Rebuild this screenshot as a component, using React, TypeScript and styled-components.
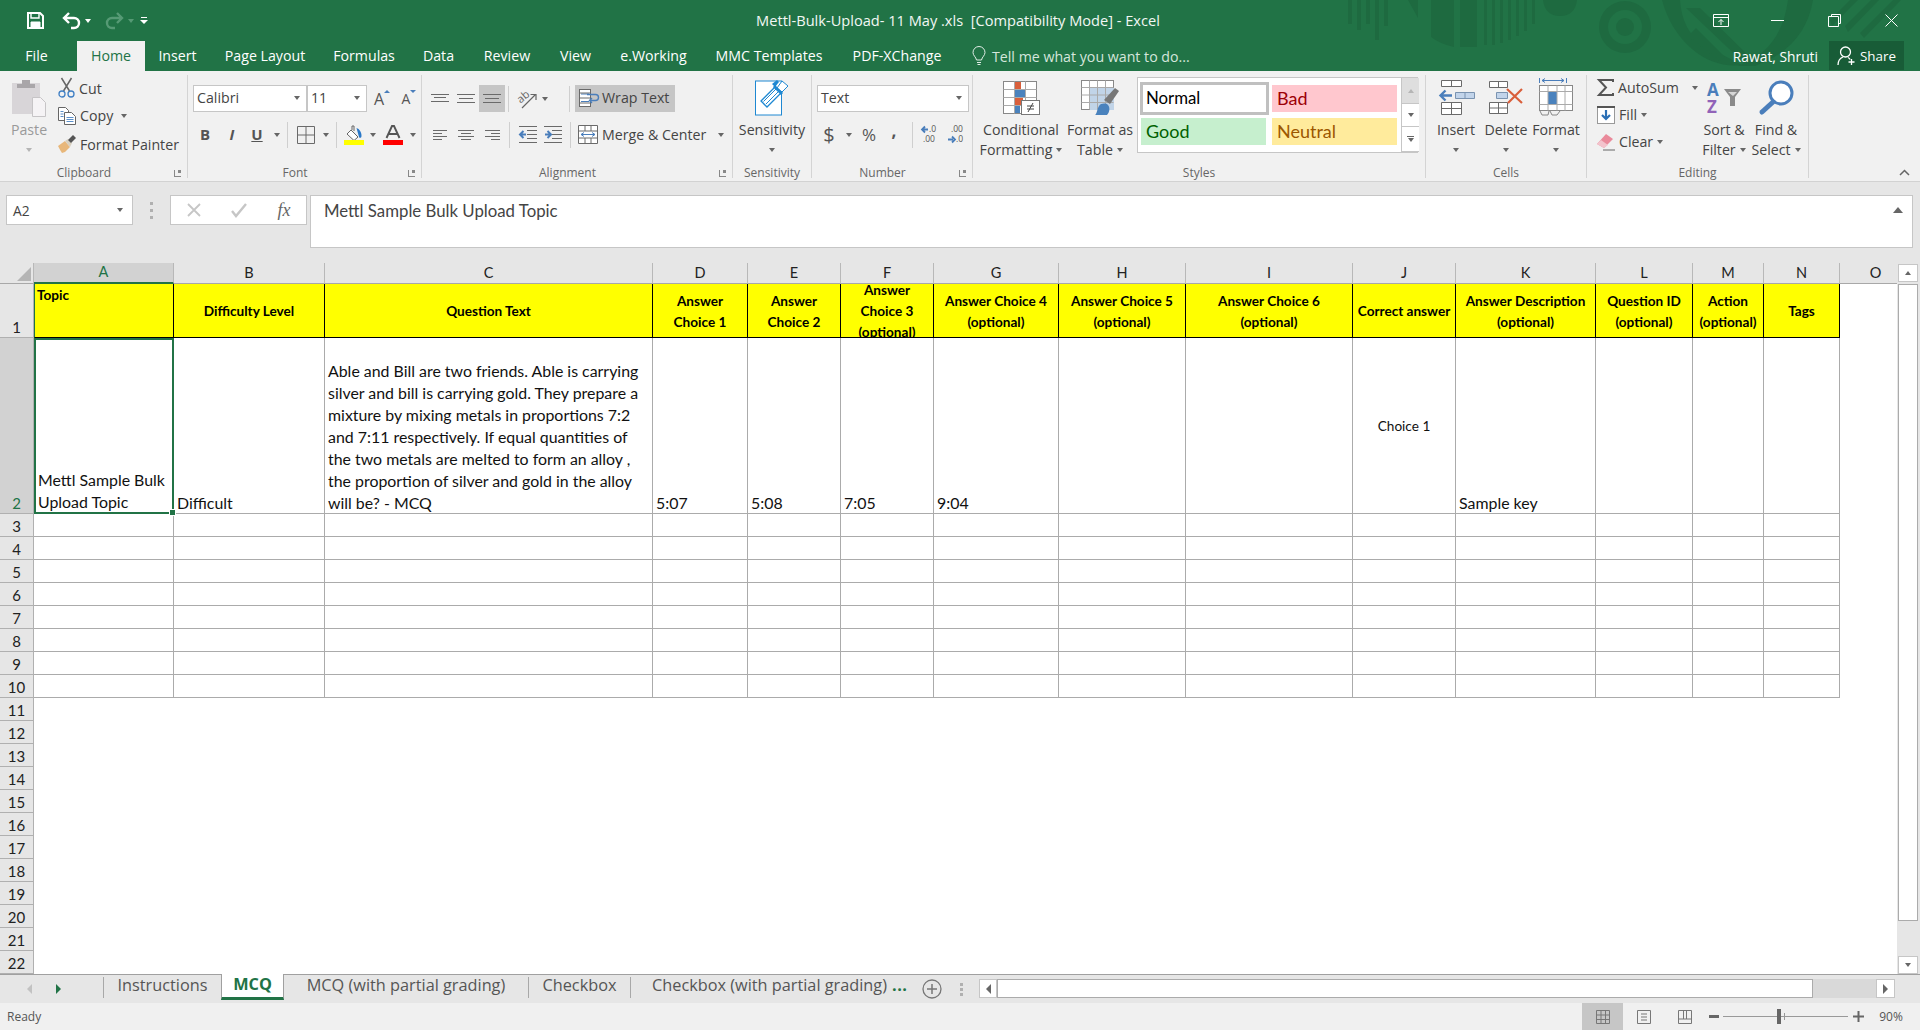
import * as React from 'react';
import styled, { createGlobalStyle } from 'styled-components';

const UI = '"Open Sans", "Noto Sans", sans-serif';
const SHEET = 'Lato, "Noto Sans", sans-serif';
const GREEN = '#217346';

const GlobalStyle = createGlobalStyle`
  html, body { margin: 0; padding: 0; background: #fff; }
  body { font-family: ${UI}; }
  svg { display: block; flex: none; overflow: visible; }
`;

const Page = styled.div`
  width: 1920px;
  height: 1030px;
  display: flex;
  flex-direction: column;
  overflow: hidden;
`;

/* title bar */
const TitleBar = styled.header`
  position: relative;
  height: 71px;
  flex: none;
  background: ${GREEN};
  color: #fff;
  overflow: hidden;
`;

const Pattern = styled.svg`
  position: absolute;
  top: 0;
  left: 1300px;
`;

const TopRow = styled.div`
  position: relative;
  height: 41px;
  display: flex;
  align-items: center;
`;

const Qat = styled.div`
  width: 756px;
  flex: none;
  padding-left: 27px;
  box-sizing: border-box;
  display: flex;
  align-items: center;
`;

const Title = styled.div`
  width: 404px;
  flex: none;
  padding-bottom: 1px;
  font-size: 14.6px;
  white-space: pre;
  text-align: center;
  color: #f2f7f4;
`;

const WinControls = styled.div`
  margin-left: auto;
  display: flex;
  align-items: center;
`;

const WinSlot = styled.div`
  width: 57px;
  display: flex;
  justify-content: center;
`;

const TabRow = styled.nav`
  position: relative;
  height: 30px;
  display: flex;
`;

const RibbonTab = styled.div<{ $w: number; $active?: boolean; $mr?: number }>`
  width: ${p => p.$w}px;
  flex: none;
  margin-right: ${p => p.$mr ?? 0}px;
  padding-bottom: 1px;
  box-sizing: border-box;
  display: flex;
  align-items: center;
  justify-content: center;
  font-size: 14.2px;
  white-space: nowrap;
  background: ${p => (p.$active ? '#f1f1f1' : 'transparent')};
  color: ${p => (p.$active ? GREEN : '#fff')};
`;

const TellMe = styled.div`
  display: flex;
  align-items: center;
  gap: 6px;
  margin-left: 15px;
  font-size: 14.2px;
  color: #d5e6dc;
`;

const UserName = styled.div`
  margin-left: auto;
  display: flex;
  align-items: center;
  font-size: 13.8px;
  margin-right: 11px;
`;

const ShareButton = styled.div`
  width: 75px;
  height: 29px;
  margin-right: 16px;
  background: #185c37;
  display: flex;
  align-items: center;
  justify-content: center;
  gap: 4px;
  font-size: 13.4px;
`;

/* ribbon */
const Ribbon = styled.section`
  height: 111px;
  flex: none;
  box-sizing: border-box;
  padding-top: 4px;
  background: #f1f1f1;
  border-bottom: 1px solid #d2d2d2;
  display: flex;
  color: #444;
  font-size: 14.2px;
`;

const Group = styled.div<{ $w: number }>`
  width: ${p => p.$w}px;
  height: 103px;
  flex: none;
  box-sizing: border-box;
  border-right: 1px solid #d4d4d4;
  display: flex;
  flex-direction: column;
`;

const GroupBody = styled.div<{ $pl?: number }>`
  height: 89px;
  flex: none;
  box-sizing: border-box;
  padding-left: ${p => p.$pl ?? 0}px;
  display: flex;
`;

const StackBody = styled(GroupBody)`
  flex-direction: column;
  padding-top: 10px;
  gap: 9px;
`;

const GroupLabel = styled.div<{ $launcher?: boolean }>`
  height: 14px;
  flex: none;
  margin-top: 2px;
  box-sizing: border-box;
  padding-right: ${p => (p.$launcher ? 19 : 0)}px;
  display: grid;
  grid-template-columns: 1fr auto 1fr;
  align-items: center;
  font-size: 12px;
  color: #666;
  line-height: 14px;
`;

const Launcher = styled.span`
  grid-column: 3;
  justify-self: end;
  margin-right: -13px;
  width: 7px;
  height: 7px;
  box-sizing: border-box;
  border-left: 1px solid #888;
  border-bottom: 1px solid #888;
  position: relative;
  &::after {
    content: '';
    position: absolute;
    right: 0;
    top: 0;
    width: 3px;
    height: 3px;
    background: #888;
  }
`;

const Caret = styled.span<{ $c?: string }>`
  display: block;
  width: 0;
  height: 0;
  flex: none;
  border-left: 3.5px solid transparent;
  border-right: 3.5px solid transparent;
  border-top: 4px solid ${p => p.$c ?? '#666'};
`;

const SpacedCaret = styled(Caret)`
  margin-left: 4px;
`;

const GrowMark = styled.span`
  width: 0;
  height: 0;
  flex: none;
  transform: translateY(-7px);
  border-left: 3px solid transparent;
  border-right: 3px solid transparent;
  border-bottom: 3px solid ${'#4a7ebb'};
`;

const ShrinkMark = styled.span`
  width: 0;
  height: 0;
  flex: none;
  transform: translateY(-7px);
  border-left: 3px solid transparent;
  border-right: 3px solid transparent;
  border-top: 3px solid ${'#4a7ebb'};
`;

const ToolRow = styled.div`
  height: 27px;
  display: flex;
  align-items: center;
`;

const Slot = styled.div<{ $w: number; $on?: boolean }>`
  width: ${p => p.$w}px;
  height: 27px;
  flex: none;
  display: flex;
  align-items: center;
  justify-content: center;
  background: ${p => (p.$on ? '#c6c6c6' : 'transparent')};
`;

const Sep = styled.span<{ $ml?: number }>`
  width: 1px;
  height: 26px;
  flex: none;
  margin-left: ${p => p.$ml ?? 0}px;
  background: #cfcfcf;
`;

const Combo = styled.div<{ $w: number }>`
  width: ${p => p.$w}px;
  height: 27px;
  flex: none;
  box-sizing: border-box;
  background: #fff;
  border: 1px solid #c6c6c6;
  padding: 0 6px 2px 3px;
  display: flex;
  align-items: center;
  justify-content: space-between;
  color: #444;
  font-size: 14.2px;
`;

const BigButton = styled.div<{ $w: number }>`
  width: ${p => p.$w}px;
  flex: none;
  display: grid;
  grid-template-columns: 100%;
  grid-template-rows: 45px 20px 20px;
  justify-items: center;
  align-items: center;
  white-space: nowrap;
  line-height: 20px;
`;

const BigLine = styled.span<{ $muted?: boolean }>`
  display: flex;
  align-items: center;
  gap: 4px;
  color: ${p => (p.$muted ? '#9a9a9a' : '#444')};
`;

const SmallColumn = styled.div<{ $w: number; $pl?: number; $mt?: number }>`
  width: ${p => p.$w}px;
  flex: none;
  box-sizing: border-box;
  margin-top: ${p => p.$mt ?? 0}px;
  padding-left: ${p => p.$pl ?? 0}px;
  display: flex;
  flex-direction: column;
`;

const SmallButton = styled.div<{ $h?: number }>`
  height: ${p => p.$h ?? 28}px;
  display: flex;
  align-items: center;
  gap: 4px;
  white-space: nowrap;
`;

const AutoSumText = styled.span`
  width: 70px;
`;

const WrapButton = styled.div`
  width: 100px;
  height: 27px;
  flex: none;
  margin-left: 5px;
  padding: 0 0 2px 4px;
  box-sizing: border-box;
  background: #c6c6c6;
  display: flex;
  align-items: center;
  gap: 3px;
`;

const MergeButton = styled.div`
  width: 153px;
  height: 27px;
  flex: none;
  padding-left: 7px;
  box-sizing: border-box;
  display: flex;
  align-items: center;
  gap: 4px;
  white-space: nowrap;
  ${Caret} { margin-left: auto; }
`;

const FontGlyph = styled.span<{ $weight?: number; $italic?: boolean; $under?: boolean; $size?: number; $lift?: number }>`
  font-size: ${p => p.$size ?? 15}px;
  font-weight: ${p => p.$weight ?? 400};
  font-style: ${p => (p.$italic ? 'italic' : 'normal')};
  text-decoration: ${p => (p.$under ? 'underline' : 'none')};
  margin-bottom: ${p => p.$lift ?? 0}px;
  color: #555;
  line-height: 1;
`;

const Gallery = styled.div`
  width: 281px;
  height: 76px;
  flex: none;
  margin: 2px 0 0 -2px;
  box-sizing: border-box;
  background: #fff;
  border: 1px solid #c6c6c6;
  display: flex;
`;

const StyleGrid = styled.div`
  width: 263px;
  flex: none;
  padding: 4px 0 0 2px;
  box-sizing: border-box;
  display: grid;
  grid-template-columns: 132px 125px;
  grid-template-rows: 33px 27px;
  row-gap: 3px;
`;

const StyleCell = styled.div<{ $bg: string; $fg: string; $normal?: boolean }>`
  box-sizing: border-box;
  background: ${p => p.$bg};
  color: ${p => p.$fg};
  font-family: ${SHEET};
  font-size: ${p => (p.$normal ? 16.8 : 18)}px;
  padding-bottom: 2px;
  display: flex;
  align-items: center;
  padding-left: ${p => (p.$normal ? 3 : 5)}px;
  ${p => (p.$normal
    ? 'width: 129px; border: 3px solid #c0c0c0;'
    : 'width: 125px; height: 27px;')}
`;

const GalleryPlainCell = styled(StyleCell)`
  margin-top: 3px;
`;

const GoodCell = styled(StyleCell)`
  margin-left: 1px;
`;

const GalleryScroll = styled.div`
  width: 17px;
  flex: none;
  display: grid;
  grid-template-rows: 26px 23px 1fr;
  border-left: 1px solid #c6c6c6;
`;

const GalleryBtn = styled.div<{ $off?: boolean }>`
  display: flex;
  flex-direction: column;
  align-items: center;
  justify-content: center;
  gap: 1px;
  background: ${p => (p.$off ? '#dedede' : '#fff')};
  border-bottom: 1px solid #c6c6c6;
`;

const UpCaret = styled(Caret)`
  transform: rotate(180deg);
`;

const TinyBar = styled.span`
  width: 7px;
  height: 1px;
  background: #666;
`;

const Collapse = styled.div`
  margin-left: auto;
  margin-right: 10px;
  align-self: flex-end;
  margin-bottom: 5px;
`;

/* formula bar */
const FormulaBar = styled.div`
  height: 81px;
  flex: none;
  box-sizing: border-box;
  padding: 13px 7px 0 6px;
  background: #e6e6e6;
  display: flex;
  align-items: flex-start;
  color: #444;
`;

const NameBox = styled.div`
  width: 127px;
  height: 30px;
  flex: none;
  box-sizing: border-box;
  padding: 0 9px 0 6px;
  background: #fff;
  border: 1px solid #c6c6c6;
  display: flex;
  align-items: center;
  justify-content: space-between;
  font-size: 13.8px;
`;

const Grip = styled.div`
  width: 37px;
  height: 30px;
  flex: none;
  display: flex;
  flex-direction: column;
  align-items: center;
  justify-content: center;
  gap: 4px;
  span { width: 3px; height: 3px; background: #b0b0b0; }
`;

const FxBox = styled.div`
  width: 137px;
  height: 30px;
  flex: none;
  box-sizing: border-box;
  background: #fff;
  border: 1px solid #c6c6c6;
  display: flex;
  align-items: center;
`;

const FxText = styled.span`
  font-family: "Liberation Serif", serif;
  font-style: italic;
  font-size: 18px;
  color: #666;
`;

const FormulaInput = styled.div`
  flex: 1;
  height: 53px;
  margin-left: 3px;
  box-sizing: border-box;
  padding: 5px 9px 0 13px;
  background: #fff;
  border: 1px solid #c6c6c6;
  display: flex;
  justify-content: space-between;
  font-family: ${SHEET};
  font-size: 16.8px;
  line-height: 20px;
  color: #444;
`;

const FormulaChevron = styled.svg`
  margin-top: 6px;
`;

/* sheet */
const SheetArea = styled.main`
  height: 711px;
  flex: none;
  display: flex;
  background: #fff;
`;

const Grid = styled.div`
  width: 1897px;
  flex: none;
  overflow: hidden;
  display: grid;
  grid-template-columns: 34px 140px 151px 328px 95px 93px 93px 125px 127px 167px 103px 140px 97px 71px 76px 72px;
  grid-template-rows: 21px 54px 176px repeat(20, 23px);
  align-content: start;
  font-family: ${SHEET};
  color: #111;
`;

const Corner = styled.div`
  background: #e6e6e6;
  border-right: 1px solid #b8b8b8;
  border-bottom: 1px solid #a8a8a8;
  position: relative;
  &::after {
    content: '';
    position: absolute;
    right: 2px;
    bottom: 2px;
    width: 0;
    height: 0;
    border-left: 14px solid transparent;
    border-bottom: 14px solid #b5b5b5;
  }
`;

const ColHead = styled.div<{ $on?: boolean }>`
  box-sizing: border-box;
  padding-bottom: 2px;
  background: ${p => (p.$on ? '#d2d2d2' : '#e6e6e6')};
  color: ${p => (p.$on ? GREEN : '#222')};
  border-right: 1px solid #b8b8b8;
  border-bottom: ${p => (p.$on ? `2px solid ${GREEN}` : '1px solid #a8a8a8')};
  display: flex;
  align-items: center;
  justify-content: center;
  font-size: 14.5px;
`;

const RowHead = styled.div<{ $on?: boolean }>`
  grid-column: 1;
  box-sizing: border-box;
  background: ${p => (p.$on ? '#d2d2d2' : '#e6e6e6')};
  color: ${p => (p.$on ? GREEN : '#222')};
  border-right: 1px solid #b0b0b0;
  border-bottom: 1px solid #b0b0b0;
  display: flex;
  align-items: flex-end;
  justify-content: center;
  font-size: 15px;
  line-height: 20px;
`;

const HeaderCell = styled.div<{ $top?: boolean; $selected?: boolean }>`
  box-sizing: border-box;
  background: #ff0;
  border-right: 1px solid #000;
  border-bottom: 1px solid #000;
  border-left: ${p => (p.$selected ? `1px solid ${GREEN}` : 'none')};
  overflow: hidden;
  display: flex;
  align-items: ${p => (p.$top ? 'flex-start' : 'center')};
  justify-content: ${p => (p.$top ? 'flex-start' : 'center')};
  padding: ${p => (p.$top ? '1px 0 0 2px' : '2px 0 0')};
  font-size: 13.6px;
  font-weight: 700;
  line-height: 21px;
  text-align: center;
  white-space: nowrap;
  color: #000;
`;

const BodyCell = styled.div<{ $mid?: boolean }>`
  box-sizing: border-box;
  border-right: 1px solid #ababab;
  border-bottom: 1px solid #ababab;
  overflow: hidden;
  display: flex;
  flex-direction: column;
  justify-content: ${p => (p.$mid ? 'center' : 'flex-end')};
  align-items: ${p => (p.$mid ? 'center' : 'flex-start')};
  padding: ${p => (p.$mid ? '1px 0 0' : '0 0 0 3px')};
  font-size: ${p => (p.$mid ? 13.6 : 15.9)}px;
  line-height: 22px;
  white-space: nowrap;
  & > div:last-child { margin-bottom: -1px; }
`;

const SelectedCell = styled(BodyCell)`
  overflow: visible;
  position: relative;
  border: 2px solid ${GREEN};
  padding-left: 2px;
  &::after {
    content: '';
    position: absolute;
    right: -4px;
    bottom: -4px;
    width: 5px;
    height: 5px;
    background: ${GREEN};
    border: 1px solid #fff;
  }
`;

const VScroll = styled.aside`
  width: 23px;
  flex: none;
  box-sizing: border-box;
  padding: 1px 2px 0 1px;
  background: #e6e6e6;
  display: flex;
  flex-direction: column;
`;

const VButton = styled.div`
  height: 18px;
  flex: none;
  box-sizing: border-box;
  background: #fff;
  border: 1px solid #c6c6c6;
  display: flex;
  align-items: center;
  justify-content: center;
`;

const VThumb = styled.div`
  height: 637px;
  flex: none;
  margin-top: 2px;
  box-sizing: border-box;
  background: #fff;
  border: 1px solid #ababab;
`;

const VTrack = styled.div`
  flex: 1;
`;

/* sheet tabs */
const TabBar = styled.div`
  height: 29px;
  flex: none;
  box-sizing: border-box;
  background: #e6e6e6;
  border-top: 1px solid #a0a0a0;
  display: flex;
  align-items: stretch;
  color: #555;
  font-size: 16.3px;
`;

const NavArrows = styled.div`
  width: 103px;
  flex: none;
  display: flex;
  align-items: center;
  gap: 24px;
  padding-left: 27px;
  box-sizing: border-box;
`;

const Arrow = styled.span<{ $c: string; $left?: boolean }>`
  width: 0;
  height: 0;
  flex: none;
  border-top: 5px solid transparent;
  border-bottom: 5px solid transparent;
  ${p => (p.$left ? `border-right: 5px solid ${p.$c};` : `border-left: 5px solid ${p.$c};`)}
`;

const SheetTab = styled.div<{ $w: number; $active?: boolean; $pl?: number }>`
  width: ${p => p.$w}px;
  flex: none;
  box-sizing: border-box;
  margin-top: ${p => (p.$active ? '-1px' : '0')};
  display: flex;
  align-items: center;
  justify-content: ${p => (p.$pl ? 'flex-start' : 'center')};
  padding-left: ${p => p.$pl ?? 0}px;
  padding-bottom: 9px;
  white-space: nowrap;
  ${p => (p.$active
    ? `background:#fff; color:${GREEN}; font-weight:700; border:1px solid #a0a0a0; border-top:none; border-bottom:3px solid ${GREEN}; height: 26px; padding-bottom: 4px;`
    : '')}
`;

const TabSep = styled.span`
  width: 1px;
  height: 21px;
  flex: none;
  align-self: center;
  margin-top: -4px;
  background: #a8a8a8;
`;

const MoreDots = styled.span`
  color: ${GREEN};
  font-weight: 700;
  margin-left: 5px;
  letter-spacing: 0.5px;
`;

const CenterSlot = styled.div<{ $w: number }>`
  width: ${p => p.$w}px;
  flex: none;
  display: flex;
  flex-direction: column;
  align-items: center;
  justify-content: center;
  gap: 2px;
  span { width: 3px; height: 3px; background: #b0b0b0; }
`;

const HScroll = styled.div`
  margin-left: 11px;
  margin-top: 4px;
  height: 19px;
  display: flex;
`;

const HButton = styled.div<{ $w: number }>`
  width: ${p => p.$w}px;
  flex: none;
  box-sizing: border-box;
  background: #fff;
  border: 1px solid #c6c6c6;
  display: flex;
  align-items: center;
  justify-content: center;
`;

const HThumb = styled.div`
  width: 816px;
  flex: none;
  box-sizing: border-box;
  background: #fff;
  border: 1px solid #ababab;
`;

const HTrack = styled.div`
  width: 63px;
  flex: none;
  background: #d9d9d9;
`;

/* status */
const StatusBar = styled.footer`
  height: 27px;
  flex: none;
  background: #f0f0f0;
  display: flex;
  align-items: center;
  font-size: 12px;
  color: #555;
  padding-left: 7px;
`;

const ViewButton = styled.div<{ $w: number; $on?: boolean }>`
  width: ${p => p.$w}px;
  height: 27px;
  flex: none;
  display: flex;
  align-items: center;
  justify-content: center;
  background: ${p => (p.$on ? '#c6c6c6' : 'transparent')};
`;

const ViewGroup = styled.div`
  margin-left: auto;
  padding-right: 7px;
  display: flex;
  align-items: center;
`;

const ZoomMinus = styled.svg`
  margin-left: 4px;
`;

const ZoomTrack = styled.div`
  width: 125px;
  height: 1px;
  flex: none;
  margin: 0 5px 0 4px;
  background: #999;
  position: relative;
  &::before {
    content: '';
    position: absolute;
    left: 54px;
    top: -7px;
    width: 4px;
    height: 15px;
    background: #666;
  }
  &::after {
    content: '';
    position: absolute;
    left: 61px;
    top: -3px;
    width: 1px;
    height: 7px;
    background: #999;
  }
`;

const ZoomText = styled.span`
  width: 44px;
  flex: none;
  text-align: center;
  margin-left: 5px;
`;

/* drawings */
const G = '#6a6a6a';
const BLUE = '#4a7ebb';

const LineIcon: React.FC<{ w: number; h: number; lines: number[][] }> = ({ w, h, lines }) => (
  <svg width={w} height={h} viewBox={`0 0 ${w} ${h}`}>
    {lines.map((l, i) => <line key={i} x1={l[0]} x2={l[1]} y1={l[2] + 0.5} y2={l[2] + 0.5} stroke={G} />)}
  </svg>
);

const TitlePattern = () => {
  const dark = '#1e6a40';
  const bars = [[48, 24], [57, 30], [66, 24], [75, 40], [84, 26]];
  const arc = [[160, 17, 47], [184, 3, 45], [192, 3, 45], [200, 3, 43], [208, 3, 40], [216, 3, 36], [224, 3, 31], [232, 3, 24]];
  return (
    <Pattern width={620} height={71} viewBox="0 0 620 71" fill={dark}>
      {bars.map(([x, h], i) => <rect key={i} x={x} y={0} width={4} height={h} />)}
      <path d="M108 0h10v18z" />
      <path d="M131 0h23v47q-14-3-23-10z" />
      {arc.map(([x, w, h], i) => <rect key={i} x={x} y={0} width={w} height={h} />)}
      <path d="M243 0h34q-2 16-17 16t-17-16z" />
      <circle cx={325} cy={27} r={26} />
      <circle cx={325} cy={27} r={17} fill={GREEN} />
      <circle cx={325} cy={27} r={9} />
      <path d="M362 0h18q2 30 22 44l40 21q-28 3-50-16t-30-49z" />
      <path d="M400 8l58 57h-12L386 8zM396 28l36 36h-8L388 36z" />
      <path d="M488 0h25q-8 48-58 66h-18q44-14 51-66z" />
      <path d="M530 20L550 0h8L532 26zM545 26L571 0h8L548 32zM560 33L593 0h8L564 38z" />
    </Pattern>
  );
};

const SaveIcon = () => (
  <svg width={17} height={17} viewBox="0 0 17 17" fill="none" stroke="#fff" strokeWidth={2}>
    <path d="M1 1h12l3 3v12H1z" />
    <path d="M4 1v5h8V1" strokeWidth={1.4} />
    <path d="M4 16V10h9v6" fill="#fff" strokeWidth={1} />
  </svg>
);

const UndoIcon: React.FC<{ c: string }> = ({ c }) => (
  <svg width={19} height={17} viewBox="0 0 19 17" fill="none" stroke={c} strokeWidth={2.4}>
    <path d="M7 1L2 6l5 5M2 6h10a4.5 4.5 0 0 1 0 10H9" />
  </svg>
);

const RedoIcon: React.FC<{ c: string }> = ({ c }) => (
  <svg width={19} height={17} viewBox="0 0 19 17" fill="none" stroke={c} strokeWidth={2.4}>
    <path d="M12 1l5 5-5 5M17 6H7a4.5 4.5 0 0 0 0 10h3" />
  </svg>
);

const QatCustom = () => (
  <svg width={8} height={8} viewBox="0 0 8 8" fill="#fff">
    <rect x={1} y={0} width={6} height={1} />
    <path d="M0 3h8L4 7z" />
  </svg>
);

const BulbIcon = () => (
  <svg width={14} height={20} viewBox="0 0 14 20" fill="none" stroke="#e2eee7" strokeWidth={1}>
    <path d="M4.5 14C4 11 1 9.5 1 6.5a6 6 0 0 1 12 0c0 3-3 4.5-3.5 7.5z" />
    <path d="M5 16.5h4M5.5 18.5h3" />
  </svg>
);

const PersonIcon = () => (
  <svg width={19} height={20} viewBox="0 0 19 20" fill="none" stroke="#fff" strokeWidth={1.3}>
    <circle cx={8.5} cy={6} r={5} />
    <path d="M1 19c0-4.5 2.5-7 5-8M11 11.5c1 .5 1.6 1 2.2 2" />
    <path d="M14.5 13v6M11.5 16h6" />
  </svg>
);

const PasteIcon = () => (
  <svg width={34} height={38} viewBox="0 0 34 38">
    <rect x={0} y={4} width={28} height={31} fill="#d8d5d8" />
    <path d="M5 9V5h5V1h8v4h5v4z" fill="#a9a6a9" />
    <path d="M20.5 18.5h8l5 5v14h-13z" fill="#f5f3f5" stroke="#c6c4c6" />
  </svg>
);

const CutIcon = () => (
  <svg width={17} height={20} viewBox="0 0 17 20" fill="none">
    <path d="M3.5 0l8 13M13.5 0l-8 13" stroke="#666" strokeWidth={1.5} />
    <circle cx={4} cy={16} r={3} stroke="#3f7fc4" strokeWidth={1.3} />
    <circle cx={13} cy={16} r={3} stroke="#3f7fc4" strokeWidth={1.3} />
  </svg>
);

const CopyIcon = () => (
  <svg width={18} height={18} viewBox="0 0 18 18" fill="#fff" stroke="#666">
    <path d="M.5.5h7l3 3v10h-10z" />
    <path d="M6.5 5.5h7l4 4v8h-11z" />
    <path d="M2.5 4.5h3M2.5 7h3M2.5 9.5h3M8.5 10.5h7M8.5 12.5h7M8.5 14.5h7" stroke="#5b8fc9" />
  </svg>
);

const PainterIcon = () => (
  <svg width={18} height={18} viewBox="0 0 18 18">
    <path d="M0 11l7-5 5 6-5 5-3 1q-2-3-4-7z" fill="#e8b77a" />
    <path d="M7 6l3-2 4 4-2 4z" fill="#d8d0c0" />
    <path d="M10 5l5-5 3 3-5 5z" fill="#555" />
  </svg>
);

const BorderIcon = () => (
  <svg width={18} height={18} viewBox="0 0 18 18" fill="none" stroke={G}>
    <path d="M.5.5h17v17H.5zM9 .5v17M.5 9h17" />
  </svg>
);

const FillIcon = () => (
  <svg width={20} height={20} viewBox="0 0 20 20">
    <path d="M7 5l7 7-4 3.5-7-6.5z" fill="#fff" stroke="#666" />
    <path d="M8 5V1h2v5" fill="none" stroke="#666" />
    <path d="M12.5 3c3 1 5 4 5 8 0 2-2 2.5-2.5 1z" fill="#2a78c8" />
    <rect x={0} y={15} width={20} height={5} fill="#ff0" />
  </svg>
);

const FontColorIcon = () => (
  <svg width={20} height={20} viewBox="0 0 20 20">
    <path d="M3.5 13L9 1h2l5.5 12M6 9h8" fill="none" stroke="#555" strokeWidth={1.9} />
    <rect x={0} y={15} width={20} height={5} fill="#f00" />
  </svg>
);

const OrientIcon = () => (
  <svg width={21} height={20} viewBox="0 0 21 20">
    <text x={1} y={11} fontSize={11} fontFamily={UI} fill="#666" transform="rotate(-40 8 8)">ab</text>
    <path d="M6 19L19 6M14.5 5.5H20V11" fill="none" stroke="#666" strokeWidth={1.2} />
  </svg>
);

const WrapIcon = () => (
  <svg width={20} height={18} viewBox="0 0 20 18" fill="none">
    <rect x={.5} y={.5} width={11} height={17} fill="#fff" stroke={G} />
    <path d="M2 5h8M2 12.5h8" stroke={BLUE} />
    <path d="M.5 4h11M.5 9h11M.5 14h11" stroke={G} />
    <path d="M8 5.5h8.5a2.5 2.5 0 0 1 0 6H11M13 9l-2.5 2.5L13 14" stroke={BLUE} strokeWidth={1.4} />
  </svg>
);

const MergeIcon = () => (
  <svg width={20} height={19} viewBox="0 0 20 19" fill="#fff" stroke={G}>
    <path d="M.5.5h19v18H.5zM.5 6h19M.5 13h19M7 .5V6M13 .5V6M7 13v5.5M13 13v5.5" />
    <path d="M3 9.5h14M6 7.5l-3 2 3 2M14 7.5l3 2-3 2" fill="none" stroke={BLUE} />
  </svg>
);

const IndentIcon: React.FC<{ flip?: boolean }> = ({ flip }) => (
  <svg width={18} height={17} viewBox="0 0 18 17" fill="none">
    <path d="M0 .5h18M8 4.5h10M8 8.5h10M8 12.5h10M0 16.5h18" stroke={G} />
    {flip
      ? <path d="M1 8.5h5M3.5 5L7 8.5 3.5 12" stroke={BLUE} strokeWidth={2} />
      : <path d="M7 8.5H2M4.5 5L1 8.5 4.5 12" stroke={BLUE} strokeWidth={2} />}
  </svg>
);

const SensitivityIcon = () => (
  <svg width={34} height={36} viewBox="0 0 34 36" fill="none">
    <rect x={.5} y={1} width={26} height={34} fill="#fff" stroke="#1e88d2" />
    <path d="M6 21l14-14 6 6-14 14z" fill="#fff" stroke="#1e88d2" strokeWidth={1.3} />
    <path d="M8.5 21.5l13-13M11 24L23 12" stroke="#1e88d2" />
    <path d="M17 4l5-4 2 2-4 5z" fill="#1e88d2" />
    <path d="M22 8l5-7 6 5-6 6z" fill="#fff" stroke="#1e88d2" />
    <path d="M19 6l8 8" stroke="#1e88d2" strokeWidth={3} />
  </svg>
);

const DecimalIcon: React.FC<{ more?: boolean }> = ({ more }) => (
  <svg width={18} height={19} viewBox="0 0 18 19">
    <g fontFamily={UI} fontSize={8.5} fill="#555">
      <text x={more ? 8 : 4} y={7}>{more ? '.0' : '.00'}</text>
      <text x={more ? 2 : 9} y={17}>{more ? '.00' : '.0'}</text>
    </g>
    {more
      ? <path d="M7 4.5H2M4 1.5L1 4.5l3 3" fill="none" stroke={BLUE} strokeWidth={1.8} />
      : <path d="M1 14.5h5M5 11.5l3 3-3 3" fill="none" stroke={BLUE} strokeWidth={1.8} />}
  </svg>
);

const CondIcon = () => (
  <svg width={37} height={34} viewBox="0 0 37 34">
    <rect x={.5} y={.5} width={33} height={32} fill="#fff" stroke="#888" />
    <rect x={11} y={1} width={7} height={7} fill="#d95f3b" />
    <rect x={11} y={8} width={12} height={8} fill="#4a82bd" />
    <rect x={11} y={16} width={9} height={8} fill="#d95f3b" />
    <rect x={11} y={24} width={6} height={8} fill="#4a82bd" />
    <path d="M.5 8.5h33M.5 16.5h33M.5 24.5h33M11.5.5v32M22.5.5v32" stroke="#aaa" fill="none" />
    <rect x={18.5} y={19.5} width={18} height={14} fill="#fff" stroke="#777" />
    <path d="M24 25h7M24 28h7M30 22l-5 9" stroke="#444" fill="none" />
  </svg>
);

const TableIcon = () => (
  <svg width={38} height={35} viewBox="0 0 38 35">
    <rect x={.5} y={.5} width={32} height={29} fill="#fff" stroke="#888" />
    <rect x={9} y={8} width={24} height={22} fill="#c1d4e8" />
    <path d="M.5 7.5h32M.5 15h32M.5 22.5h32M8.5.5v29M16.5.5v29M24.5.5v29" stroke="#aaa" fill="none" />
    <path d="M23 20L34 8l4 3-9 13z" fill="#777" />
    <path d="M14 35c2-1 2-6 4-9s7-3 9-1 2 7-1 10z" fill="#4a82bd" />
  </svg>
);

const InsertIcon = () => (
  <svg width={37} height={35} viewBox="0 0 37 35" fill="#fff" stroke={G}>
    <path d="M3.5.5h20v6h-20zM13.5.5v6" />
    <path d="M3.5 22.5h20v12h-20zM3.5 28.5h20M13.5 22.5v12" />
    <path d="M17.5 12.5h19v6h-19zM27 12.5v6" fill="#c2d4ea" stroke="#7a93b0" />
    <path d="M14 15.5H3M7.5 10.5l-5 5 5 5" fill="none" stroke={BLUE} strokeWidth={2.4} />
  </svg>
);

const DeleteIcon = () => (
  <svg width={35} height={33} viewBox="0 0 35 33" fill="#fff" stroke={G}>
    <path d="M.5.5h18v6H.5zM9.5.5v6" />
    <path d="M.5 21.5h18v11H.5zM.5 27h18M9.5 21.5v11" />
    <path d="M7.5 11.5h11v6h-11z" fill="#c2d4ea" stroke="#7a93b0" />
    <path d="M18 8l15 14M33 8L19 22" fill="none" stroke="#d95f3b" strokeWidth={2.2} />
  </svg>
);

const FormatIcon = () => (
  <svg width={35} height={39} viewBox="0 0 35 39" fill="none">
    <path d="M.5 0v5M27.5 0v5M3 2.5h22M6 .5l-3 2 3 2M22 .5l3 2-3 2" stroke={BLUE} />
    <rect x={.5} y={7.5} width={33} height={25} fill="#fff" stroke="#888" />
    <rect x={9} y={13} width={9} height={13} fill="#4a82bd" />
    <path d="M.5 13.5h33M.5 26.5h33M9 7.5v25M18 7.5v25M26 7.5v25" stroke="#aaa" />
    <path d="M1 33l2 4h6l1-4M11 33l2 4h5l3-4" stroke="#888" />
  </svg>
);

const SigmaIcon = () => (
  <svg width={17} height={17} viewBox="0 0 17 17" fill="none">
    <path d="M16 3V1H2l7 7.5L2 16h14v-2" stroke="#555" strokeWidth={2} />
  </svg>
);

const FillDownIcon = () => (
  <svg width={18} height={18} viewBox="0 0 18 18">
    <rect x={.5} y={.5} width={17} height={17} fill="#fff" stroke="#999" />
    <rect x={0} y={0} width={18} height={2} fill="#555" />
    <path d="M9 4v8M5 9l4 4 4-4" fill="none" stroke="#2a6fb5" strokeWidth={2.2} />
  </svg>
);

const ClearIcon = () => (
  <svg width={18} height={18} viewBox="0 0 18 18">
    <path d="M0 11L9 1l7 5-9 9z" fill="#ea8a9b" />
    <path d="M0 11l4-4 7 5-4 3z" fill="#f3c3cc" />
    <path d="M6 17h12" stroke="#666" />
  </svg>
);

const SortIcon = () => (
  <svg width={34} height={32} viewBox="0 0 34 32">
    <text x={0} y={14} fontSize={17} fontWeight={700} fontFamily={UI} fill={BLUE}>A</text>
    <text x={0} y={31} fontSize={17} fontWeight={700} fontFamily={UI} fill="#9163b8">Z</text>
    <path d="M17 7h17l-6 8v9h-5v-9z" fill="#8a8a8a" />
    <path d="M21 10h9l-4 4z" fill="#d6d6d6" />
  </svg>
);

const FindIcon = () => (
  <svg width={35} height={35} viewBox="0 0 35 35" fill="none">
    <circle cx={22} cy={13} r={11} fill="#fff" stroke={BLUE} strokeWidth={3} />
    <path d="M14 22L3 32" stroke={BLUE} strokeWidth={5} strokeLinecap="round" />
  </svg>
);

const CrossIcon: React.FC<{ c: string }> = ({ c }) => (
  <svg width={14} height={14} viewBox="0 0 14 14" fill="none">
    <path d="M1 1l12 12M13 1L1 13" stroke={c} strokeWidth={1.8} />
  </svg>
);

const CheckIcon = () => (
  <svg width={16} height={14} viewBox="0 0 16 14" fill="none">
    <path d="M1 8l4 5L15 1" stroke="#c6c6c6" strokeWidth={2.4} />
  </svg>
);

/* data */
const columns = ['A', 'B', 'C', 'D', 'E', 'F', 'G', 'H', 'I', 'J', 'K', 'L', 'M', 'N'];

const headers: string[][] = [
  ['Difficulty Level'],
  ['Question Text'],
  ['Answer', 'Choice 1'],
  ['Answer', 'Choice 2'],
  ['Answer', 'Choice 3', '(optional)'],
  ['Answer Choice 4', '(optional)'],
  ['Answer Choice 5', '(optional)'],
  ['Answer Choice 6', '(optional)'],
  ['Correct answer'],
  ['Answer Description', '(optional)'],
  ['Question ID', '(optional)'],
  ['Action', '(optional)'],
  ['Tags'],
];

const question = [
  'Able and Bill are two friends. Able is carrying',
  'silver and bill is carrying gold. They prepare a',
  'mixture by mixing metals in proportions 7:2',
  'and 7:11 respectively. If equal quantities of',
  'the two metals are melted to form an alloy ,',
  'the proportion of silver and gold in the alloy',
  'will be? - MCQ',
];

const row2: string[][] = [
  ['Difficult'], question, ['5:07'], ['5:08'], ['7:05'], ['9:04'], [], [], [], ['Sample key'], [], [], [],
];

const ribbonTabs: [string, number][] = [
  ['Home', 68], ['Insert', 65], ['Page Layout', 110], ['Formulas', 88], ['Data', 61],
  ['Review', 76], ['View', 61], ['e.Working', 95], ['MMC Templates', 136], ['PDF-XChange', 120],
];

const Lines: React.FC<{ items: string[] }> = ({ items }) => (
  <>{items.map(l => <div key={l}>{l}</div>)}</>
);

const App = () => (
  <Page>
    <GlobalStyle />
    <TitleBar>
      <TitlePattern />
      <TopRow>
        <Qat>
          <SaveIcon />
          <Slot $w={18} />
          <UndoIcon c="#fff" />
          <Slot $w={14}><Caret $c="#fff" /></Slot>
          <Slot $w={10} />
          <RedoIcon c="#569a75" />
          <Slot $w={14}><Caret $c="#569a75" /></Slot>
          <Slot $w={12}><QatCustom /></Slot>
        </Qat>
        <Title>Mettl-Bulk-Upload- 11 May .xls  [Compatibility Mode] - Excel</Title>
        <WinControls>
          <WinSlot>
            <svg width={16} height={13} viewBox="0 0 16 13" fill="none" stroke="#fff">
              <path d="M.5.5h15v12H.5zM.5 3.5h15M8 11V5.5M5.5 8L8 5.5 10.5 8" />
            </svg>
          </WinSlot>
          <WinSlot><svg width={13} height={3} viewBox="0 0 13 3"><rect y={1} width={13} height={1} fill="#fff" /></svg></WinSlot>
          <WinSlot>
            <svg width={13} height={13} viewBox="0 0 13 13" fill="none" stroke="#fff">
              <path d="M3.5 2.5v-2h9v9h-2M.5 2.5h10v10H.5z" />
            </svg>
          </WinSlot>
          <WinSlot>
            <svg width={13} height={13} viewBox="0 0 13 13" fill="none" stroke="#fff">
              <path d="M.5.5l12 12M12.5.5l-12 12" />
            </svg>
          </WinSlot>
        </WinControls>
      </TopRow>
      <TabRow>
        <RibbonTab $w={73} $mr={4}>File</RibbonTab>
        {ribbonTabs.map(([label, w]) => (
          <RibbonTab key={label} $w={w} $active={label === 'Home'}>{label}</RibbonTab>
        ))}
        <TellMe><BulbIcon />Tell me what you want to do...</TellMe>
        <UserName>Rawat, Shruti</UserName>
        <ShareButton><PersonIcon />Share</ShareButton>
      </TabRow>
    </TitleBar>

    <Ribbon>
      <Group $w={188}>
        <GroupBody>
          <BigButton $w={58}>
            <PasteIcon />
            <BigLine $muted>Paste</BigLine>
            <Caret $c="#b5b5b5" />
          </BigButton>
          <SmallColumn $w={129}>
            <SmallButton $h={26}><CutIcon />Cut</SmallButton>
            <SmallButton $h={29}><CopyIcon />Copy<SpacedCaret /></SmallButton>
            <SmallButton $h={28}><PainterIcon />Format Painter</SmallButton>
          </SmallColumn>
        </GroupBody>
        <GroupLabel $launcher><span />Clipboard<Launcher /></GroupLabel>
      </Group>

      <Group $w={234}>
        <StackBody $pl={5}>
          <ToolRow>
            <Combo $w={114}>Calibri<Caret /></Combo>
            <Combo $w={60}>11<Caret /></Combo>
            <Slot $w={30}><FontGlyph $size={16}>A</FontGlyph><GrowMark /></Slot>
            <Slot $w={24}><FontGlyph $size={14}>A</FontGlyph><ShrinkMark /></Slot>
          </ToolRow>
          <ToolRow>
            <Slot $w={24}><FontGlyph $weight={700}>B</FontGlyph></Slot>
            <Slot $w={30}><FontGlyph $weight={700} $italic>I</FontGlyph></Slot>
            <Slot $w={20}><FontGlyph $weight={700} $under>U</FontGlyph></Slot>
            <Slot $w={20}><Caret /></Slot>
            <Sep />
            <Slot $w={35}><BorderIcon /></Slot>
            <Slot $w={5}><Caret /></Slot>
            <Sep $ml={8} />
            <Slot $w={34}><FillIcon /></Slot>
            <Slot $w={4}><Caret /></Slot>
            <Slot $w={36}><FontColorIcon /></Slot>
            <Slot $w={4}><Caret /></Slot>
          </ToolRow>
        </StackBody>
        <GroupLabel $launcher><span />Font<Launcher /></GroupLabel>
      </Group>

      <Group $w={311}>
        <StackBody $pl={1}>
          <ToolRow>
            <Slot $w={34}><LineIcon w={18} h={9} lines={[[0, 18, 0], [3, 15, 3], [0, 18, 7]]} /></Slot>
            <Slot $w={18}><LineIcon w={18} h={10} lines={[[0, 18, 0], [2, 16, 4], [0, 18, 8]]} /></Slot>
            <Slot $w={4} />
            <Slot $w={26} $on><LineIcon w={18} h={9} lines={[[0, 18, 0], [2, 16, 4], [0, 18, 8]]} /></Slot>
            <Sep $ml={3} />
            <Slot $w={34}><OrientIcon /></Slot>
            <Slot $w={3}><Caret /></Slot>
            <Sep $ml={23} />
            <WrapButton><WrapIcon />Wrap Text</WrapButton>
          </ToolRow>
          <ToolRow>
            <Slot $w={34}><LineIcon w={14} h={10} lines={[[0, 14, 0], [0, 9, 3], [0, 14, 6], [0, 9, 9]]} /></Slot>
            <Slot $w={18}><LineIcon w={16} h={10} lines={[[0, 16, 0], [3, 13, 3], [0, 16, 6], [3, 13, 9]]} /></Slot>
            <Slot $w={34}><LineIcon w={15} h={10} lines={[[0, 15, 0], [6, 15, 3], [0, 15, 6], [6, 15, 9]]} /></Slot>
            <Sep />
            <Slot $w={36}><IndentIcon /></Slot>
            <Slot $w={14}><IndentIcon flip /></Slot>
            <Sep $ml={10} />
            <MergeButton><MergeIcon />Merge &amp; Center<Caret /></MergeButton>
          </ToolRow>
        </StackBody>
        <GroupLabel $launcher><span />Alignment<Launcher /></GroupLabel>
      </Group>

      <Group $w={79}>
        <GroupBody>
          <BigButton $w={78}>
            <SensitivityIcon />
            <BigLine>Sensitivity</BigLine>
            <Caret />
          </BigButton>
        </GroupBody>
        <GroupLabel><span />Sensitivity<span /></GroupLabel>
      </Group>

      <Group $w={161}>
        <StackBody $pl={5}>
          <Combo $w={152}>Text<Caret /></Combo>
          <ToolRow>
            <Slot $w={24}><FontGlyph $size={20}>$</FontGlyph></Slot>
            <Slot $w={16}><Caret /></Slot>
            <Slot $w={24}><FontGlyph $size={17}>%</FontGlyph></Slot>
            <Slot $w={26}><FontGlyph $size={17} $weight={700} $lift={8}>,</FontGlyph></Slot>
            <Sep $ml={5} />
            <Slot $w={34}><DecimalIcon more /></Slot>
            <Slot $w={18}><DecimalIcon /></Slot>
          </ToolRow>
        </StackBody>
        <GroupLabel $launcher><span />Number<Launcher /></GroupLabel>
      </Group>

      <Group $w={453}>
        <GroupBody $pl={8}>
          <BigButton $w={80}>
            <CondIcon />
            <BigLine>Conditional</BigLine>
            <BigLine>Formatting <Caret /></BigLine>
          </BigButton>
          <BigButton $w={78}>
            <TableIcon />
            <BigLine>Format as</BigLine>
            <BigLine>Table <Caret /></BigLine>
          </BigButton>
          <Gallery>
            <StyleGrid>
              <StyleCell $bg="#fff" $fg="#000" $normal>Normal</StyleCell>
              <GalleryPlainCell $bg="#ffc7ce" $fg="#9c0006">Bad</GalleryPlainCell>
              <GoodCell $bg="#c6efce" $fg="#006100">Good</GoodCell>
              <StyleCell $bg="#ffeb9c" $fg="#9c5700">Neutral</StyleCell>
            </StyleGrid>
            <GalleryScroll>
              <GalleryBtn $off><UpCaret $c="#b5b5b5" /></GalleryBtn>
              <GalleryBtn><Caret /></GalleryBtn>
              <GalleryBtn><TinyBar /><Caret /></GalleryBtn>
            </GalleryScroll>
          </Gallery>
        </GroupBody>
        <GroupLabel><span />Styles<span /></GroupLabel>
      </Group>

      <Group $w={161}>
        <GroupBody>
          <BigButton $w={60}><InsertIcon /><BigLine>Insert</BigLine><Caret /></BigButton>
          <BigButton $w={40}><DeleteIcon /><BigLine>Delete</BigLine><Caret /></BigButton>
          <BigButton $w={60}><FormatIcon /><BigLine>Format</BigLine><Caret /></BigButton>
        </GroupBody>
        <GroupLabel><span />Cells<span /></GroupLabel>
      </Group>

      <Group $w={222}>
        <GroupBody>
          <SmallColumn $w={111} $pl={10} $mt={-1}>
            <SmallButton $h={27}><SigmaIcon /><AutoSumText>AutoSum</AutoSumText><Caret /></SmallButton>
            <SmallButton $h={27}><FillDownIcon />Fill<Caret /></SmallButton>
            <SmallButton $h={27}><ClearIcon />Clear<Caret /></SmallButton>
          </SmallColumn>
          <BigButton $w={52}><SortIcon /><BigLine>Sort &amp;</BigLine><BigLine>Filter <Caret /></BigLine></BigButton>
          <BigButton $w={52}><FindIcon /><BigLine>Find &amp;</BigLine><BigLine>Select <Caret /></BigLine></BigButton>
        </GroupBody>
        <GroupLabel><span />Editing<span /></GroupLabel>
      </Group>

      <Collapse>
        <svg width={11} height={7} viewBox="0 0 11 7" fill="none" stroke="#666" strokeWidth={1.5}>
          <path d="M1 6l4.5-4.5L10 6" />
        </svg>
      </Collapse>
    </Ribbon>

    <FormulaBar>
      <NameBox>A2<Caret /></NameBox>
      <Grip><span /><span /><span /></Grip>
      <FxBox>
        <Slot $w={45}><CrossIcon c="#c6c6c6" /></Slot>
        <Slot $w={46}><CheckIcon /></Slot>
        <Slot $w={44}><FxText>fx</FxText></Slot>
      </FxBox>
      <FormulaInput>
        Mettl Sample Bulk Upload Topic
        <FormulaChevron width={10} height={7} viewBox="0 0 10 7">
          <path d="M5 0l5 6H0z" fill="#666" />
        </FormulaChevron>
      </FormulaInput>
    </FormulaBar>

    <SheetArea>
      <Grid>
        <Corner />
        {columns.map(c => <ColHead key={c} $on={c === 'A'}>{c}</ColHead>)}
        <ColHead>O</ColHead>

        <RowHead>1</RowHead>
        <HeaderCell $top $selected>Topic</HeaderCell>
        {headers.map(h => (
          <HeaderCell key={h.join()}><div><Lines items={h} /></div></HeaderCell>
        ))}

        <RowHead $on>2</RowHead>
        <SelectedCell><div>Mettl Sample Bulk</div><div>Upload Topic</div></SelectedCell>
        {row2.map((lines, i) => (i === 8
          ? <BodyCell key={i} $mid>Choice 1</BodyCell>
          : <BodyCell key={i}><Lines items={lines} /></BodyCell>
        ))}

        {Array.from({ length: 20 }, (_, i) => i + 3).map(n => (
          <React.Fragment key={n}>
            <RowHead>{n}</RowHead>
            {n <= 10 && columns.map(c => <BodyCell key={c} />)}
          </React.Fragment>
        ))}
      </Grid>
      <VScroll>
        <VButton><UpCaret /></VButton>
        <VThumb />
        <VTrack />
        <VButton><Caret /></VButton>
      </VScroll>
    </SheetArea>

    <TabBar>
      <NavArrows><Arrow $c="#c2c2c2" $left /><Arrow $c={GREEN} /></NavArrows>
      <TabSep />
      <SheetTab $w={117}>Instructions</SheetTab>
      <SheetTab $w={63} $active>MCQ</SheetTab>
      <SheetTab $w={244}>MCQ (with partial grading)</SheetTab>
      <TabSep />
      <SheetTab $w={101}>Checkbox</SheetTab>
      <TabSep />
      <SheetTab $w={279} $pl={21}>Checkbox (with partial grading)<MoreDots>...</MoreDots></SheetTab>
      <CenterSlot $w={44}>
        <svg width={20} height={20} viewBox="0 0 20 20" fill="none" stroke="#777">
          <circle cx={10} cy={10} r={9} strokeWidth={1.3} />
          <path d="M10 5v10M5 10h10" strokeWidth={1.5} />
        </svg>
      </CenterSlot>
      <CenterSlot $w={14}><span /><span /><span /></CenterSlot>
      <HScroll>
        <HButton $w={18}><Arrow $c="#666" $left /></HButton>
        <HThumb />
        <HTrack />
        <HButton $w={19}><Arrow $c="#666" /></HButton>
      </HScroll>
    </TabBar>

    <StatusBar>
      Ready
      <ViewGroup>
        <ViewButton $w={41} $on>
          <svg width={14} height={14} viewBox="0 0 14 14" fill="none" stroke="#777"><path d="M.5.5h13v13H.5zM.5 5h13M.5 9.5h13M5 .5v13M9.5.5v13" /></svg>
        </ViewButton>
        <ViewButton $w={41}>
          <svg width={14} height={14} viewBox="0 0 14 14" fill="none" stroke="#777"><path d="M.5.5h13v13H.5zM4 4h6M4 7h6M4 10h6" /></svg>
        </ViewButton>
        <ViewButton $w={41}>
          <svg width={14} height={14} viewBox="0 0 14 14" fill="none" stroke="#777"><path d="M.5.5h13v13H.5zM.5 9h13M5.5.5V9M8.5.5V9" /></svg>
        </ViewButton>
        <ZoomMinus width={10} height={3} viewBox="0 0 10 3"><rect width={10} height={3} fill="#666" /></ZoomMinus>
        <ZoomTrack />
        <svg width={11} height={11} viewBox="0 0 11 11" fill="#666"><rect y={4.5} width={11} height={2} /><rect x={4.5} width={2} height={11} /></svg>
        <ZoomText>90%</ZoomText>
      </ViewGroup>
    </StatusBar>
  </Page>
);

export default App;
